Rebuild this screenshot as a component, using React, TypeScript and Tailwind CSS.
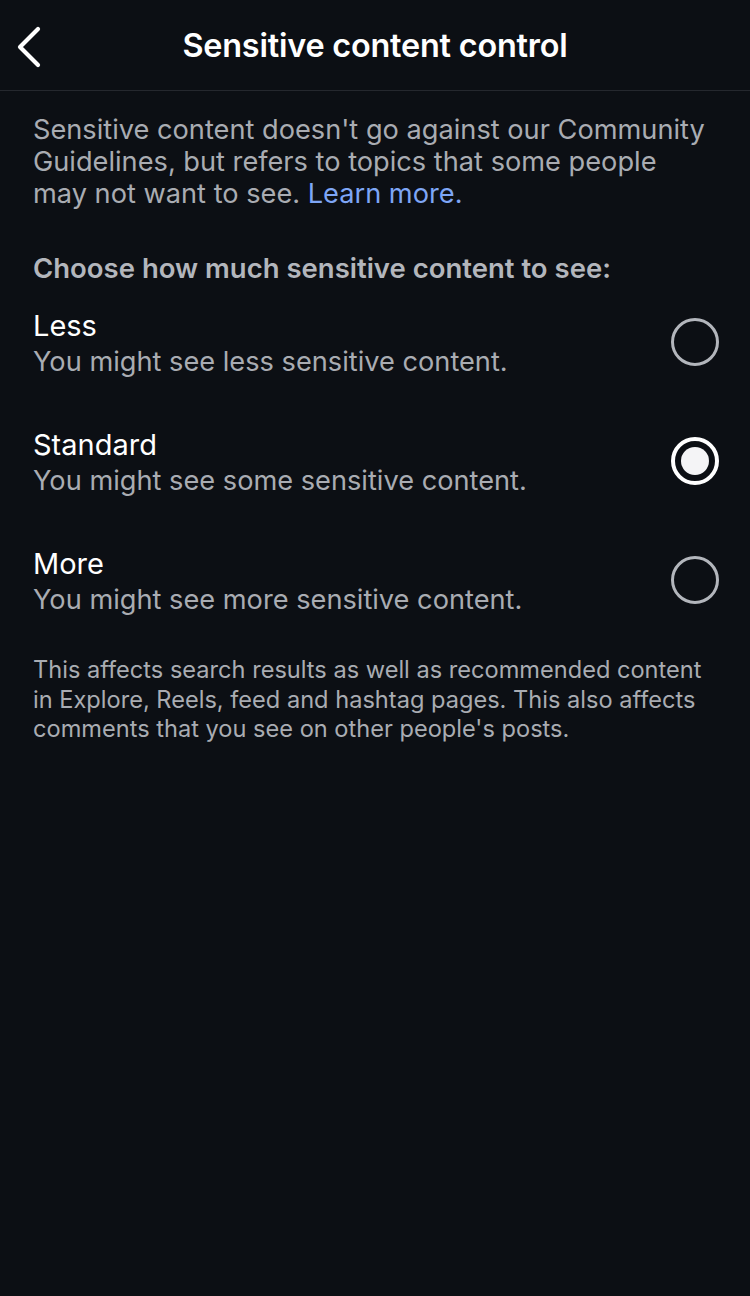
import React, { useState } from "react";

type Option = {
  id: string;
  title: string;
  details: string;
};

const options: Option[] = [
  { id: "less", title: "Less", details: "You might see less sensitive content." },
  { id: "standard", title: "Standard", details: "You might see some sensitive content." },
  { id: "more", title: "More", details: "You might see more sensitive content." },
];

const Radio = ({ checked }: { checked: boolean }) =>
  checked ? (
    <div className="w-12 h-12 rounded-full border-4 border-white flex items-center justify-center">
      <div className="w-7 h-7 rounded-full bg-[#f4f4f6]" />
    </div>
  ) : (
    <div className="w-12 h-12 rounded-full border-[3px] border-[#b3b6bc]" />
  );

const App = () => {
  const [selected, setSelected] = useState("standard");

  return (
    <div
      className="min-h-[1296px] w-full bg-[#0c0f14] text-white"
      style={{ fontFamily: "Inter, 'Noto Sans', sans-serif" }}
    >
      {/* header */}
      <div className="relative h-[91px] flex items-center justify-center border-b border-[#25282e]">
        <button className="absolute left-[16px] top-[26px] p-0">
          <svg width="28" height="42" viewBox="0 0 28 42" fill="none">
            <path d="M22 3 L4 21 L22 39" stroke="white" strokeWidth="4.2" strokeLinecap="round" strokeLinejoin="round" />
          </svg>
        </button>
        <h1 className="text-[32.4px] font-semibold tracking-[-0.2px] mt-[2px]">Sensitive content control</h1>
      </div>

      <div className="px-[33px]">
        <p className="mt-[23px] text-[27.2px] leading-[32px] text-[#a9acb2]">
          Sensitive content doesn't go against our Community Guidelines, but refers to topics that some people may not
          want to see. <span className="text-[#7ea6f6]">Learn more.</span>
        </p>

        <h2 className="mt-[42px] text-[27.5px] leading-[32px] font-semibold text-[#b3b6bc]">
          Choose how much sensitive content to see:
        </h2>

        <div className="mt-[24px] flex flex-col gap-[47px]">
          {options.map((o) => (
            <div
              key={o.id}
              className="flex items-center justify-between cursor-pointer"
              onClick={() => setSelected(o.id)}
            >
              <div>
                <div className="text-[29px] leading-[36px] text-white">{o.title}</div>
                <div className="text-[27.2px] leading-[36px] text-[#a9acb2]">{o.details}</div>
              </div>
              <div className="mr-[-2px] -mt-[5px]">
                <Radio checked={selected === o.id} />
              </div>
            </div>
          ))}
        </div>

        <p className="mt-[37px] text-[23.6px] leading-[29.5px] text-[#a9acb2]">
          This affects search results as well as recommended content in Explore, Reels, feed and hashtag pages. This
          also affects comments that you see on other people's posts.
        </p>
      </div>
    </div>
  );
};

export default App;
